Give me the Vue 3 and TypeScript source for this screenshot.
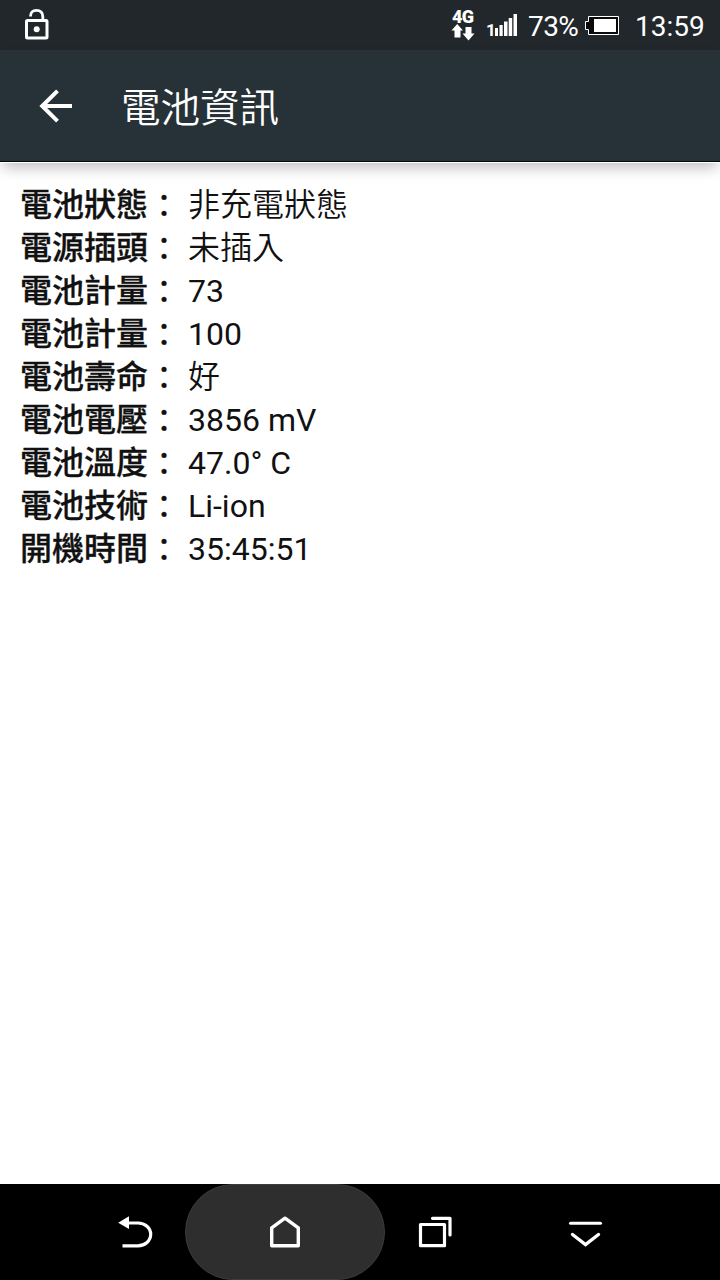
<script setup lang="ts">
interface InfoRow {
  label: string
  value: string
  cjk?: boolean
}

const rows: InfoRow[] = [
  { label: '電池狀態', value: '非充電狀態', cjk: true },
  { label: '電源插頭', value: '未插入', cjk: true },
  { label: '電池計量', value: '73' },
  { label: '電池計量', value: '100' },
  { label: '電池壽命', value: '好', cjk: true },
  { label: '電池電壓', value: '3856 mV' },
  { label: '電池溫度', value: '47.0° C' },
  { label: '電池技術', value: 'Li-ion' },
  { label: '開機時間', value: '35:45:51' },
]
</script>

<template>
  <div class="screen">
    <header class="status">
      <svg class="lock" width="26" height="34" viewBox="0 0 26 34" fill="none" stroke="#fff">
        <rect x="2.5" y="13.5" width="20.5" height="17.5" rx="1" stroke-width="3" />
        <path d="M6.500 9.500C6.500 5.500 8.500 3.300 12.500 3.300S18.800 6 18.800 9.500V13" stroke-width="2.800" />
        <circle cx="12.700" cy="22.300" r="3" fill="#fff" stroke="none" />
      </svg>
      <div class="network">
        <span class="network-label">4G</span>
        <svg width="24" height="18" viewBox="0 0 24 18" fill="#fff">
          <path d="M5.200 0 11 6.500H8.500V13.500H2.500V6.500H-.5Z" />
          <path d="M13.500 3H19.500V9.500H22.500L16.500 16.500 10.500 9.500H13.500Z" />
        </svg>
      </div>
      <div class="signal">
        <span class="sim">1</span>
        <svg width="24" height="22" viewBox="0 0 24 22" fill="#fff">
          <path d="M0 14h3v8H0zM4.500 11h3.200v11H4.500zM9 7.500h3.500V22H9zM13.700 4h3.500v18h-3.500zM18.500 0H22v22h-3.500z" />
        </svg>
      </div>
      <span class="percent">73%</span>
      <svg class="battery" width="36" height="22" viewBox="0 0 36 22">
        <path d="M4.500 1.500H34.500V19.500H4.500V14.500H1.500V6.500H4.500Z" fill="#080a0b" stroke="#fff" />
        <rect x="10" y="4" width="22" height="13" fill="#fff" />
      </svg>
      <span class="clock">13:59</span>
    </header>

    <div class="toolbar">
      <svg class="back" width="34" height="34" viewBox="0 0 34 34" fill="none" stroke="#fff" stroke-width="4">
        <path d="M33 17H4M18.500 1.800 3.200 17 18.500 32.200" />
      </svg>
      <h1>電池資訊</h1>
    </div>

    <main class="content">
      <p v-for="(row, index) in rows" :key="index">
        <b>{{ row.label }}<span class="colon">：</span></b>
        <span class="value" :class="{ cjk: row.cjk }">{{ row.value }}</span>
      </p>
    </main>

    <nav class="nav">
      <div class="key">
        <svg width="36" height="34" viewBox="0 0 36 34" fill="none" stroke="#fff" stroke-width="3.200">
          <path d="M8 8H21C28 8 33.700 12.800 33.700 19.300S28 30.800 21 30.800H5.500" />
          <path d="M1.200 7.800 12 1.200V14Z" fill="#fff" stroke="none" />
        </svg>
      </div>
      <div class="key pressed">
        <svg width="36" height="34" viewBox="0 0 36 34" fill="none" stroke="#fff" stroke-width="3.400" stroke-linejoin="round">
          <path d="M4.700 12.800 18 3.200 31.300 12.800V30.700H4.700Z" />
        </svg>
      </div>
      <div class="key">
        <svg width="36" height="34" viewBox="0 0 36 34" fill="none" stroke="#fff" stroke-width="3.200" stroke-linejoin="round" stroke-linecap="round">
          <path d="M3.500 9.500H27.500V30.700H3.500Z" />
          <path d="M15.500 3.300H33V20" />
        </svg>
      </div>
      <div class="key">
        <svg width="36" height="34" viewBox="0 0 36 34" fill="none" stroke="#fff" stroke-width="3" stroke-linecap="round">
          <path d="M3.500 8.200H33.500" />
          <path d="M5.500 19.500 18.500 29.500 31.500 19.500" stroke-width="3.400" />
        </svg>
      </div>
    </nav>
  </div>
</template>

<style>
body {
  margin: 0;
}
</style>

<style scoped>
.screen {
  width: 720px;
  height: 1280px;
  display: flex;
  flex-direction: column;
  overflow: hidden;
  background: #fff;
  color: #111;
  font-family: Roboto, 'Noto Sans CJK TC', sans-serif;
}

.status {
  height: 50px;
  flex: none;
  display: flex;
  box-sizing: border-box;
  padding: 0 16px 0 23.5px;
  background: #22272b;
  color: #fff;
}

.lock {
  margin-top: 7px;
}

.network {
  width: 24px;
  margin: 10px 11px 0 auto;
}

.network svg {
  display: block;
  overflow: visible;
}

.network-label {
  display: block;
  height: 14px;
  font: 900 18px/14px Roboto, sans-serif;
  letter-spacing: -0.8px;
}

.signal {
  display: flex;
  align-items: flex-end;
  height: 22px;
  margin: 14px 0 0 -1px;
}

.sim {
  width: 8px;
  margin: 0 1px 0 0;
  font: 700 17px/12px Roboto, sans-serif;
}

.percent {
  width: 51px;
  margin: 0 5px 0 9px;
  font-size: 28px;
  line-height: 53px;
  letter-spacing: -0.6px;
}

.battery {
  margin-top: 15px;
}

.clock {
  width: 69px;
  margin-left: 15px;
  font-size: 28px;
  line-height: 53px;
}

.toolbar {
  position: relative;
  z-index: 1;
  height: 112px;
  flex: none;
  display: flex;
  align-items: center;
  box-sizing: border-box;
  padding-left: 39px;
  border-bottom: 1px solid #02080c;
  background: #273238;
  box-shadow: 0 1px 0 #fff, 0 8px 14px -3px rgba(0, 0, 0, 0.27);
}

h1 {
  margin: -1px 0 0 48px;
  color: #fff;
  font: 350 39.5px/60px 'Noto Sans CJK TC', sans-serif;
}

.content {
  flex: 1;
  padding: 22px 20px 0;
}

p {
  display: flex;
  height: 43px;
  margin: 0;
  font-size: 32px;
  line-height: 43px;
  white-space: nowrap;
}

p b {
  width: 168px;
  margin-top: -3px;
  font-weight: 500;
  -webkit-text-stroke: 0.3px currentColor;
}

.colon {
  display: inline-block;
  font-family: 'Noto Sans CJK TC', sans-serif;
  font-weight: 400;
  transform: translateY(1px);
}

.value {
  font-weight: 400;
}

.cjk {
  font-weight: 350;
}

.nav {
  height: 96px;
  flex: none;
  display: flex;
  justify-content: center;
  background: #000;
}

.key {
  width: 150px;
  height: 96px;
  display: flex;
  align-items: center;
  justify-content: center;
}

.pressed {
  width: 200px;
  margin: 0 -25px;
  box-sizing: border-box;
  border: 1px solid #3b3b3b;
  border-radius: 48px;
  background: #2e2e2e;
}
</style>
